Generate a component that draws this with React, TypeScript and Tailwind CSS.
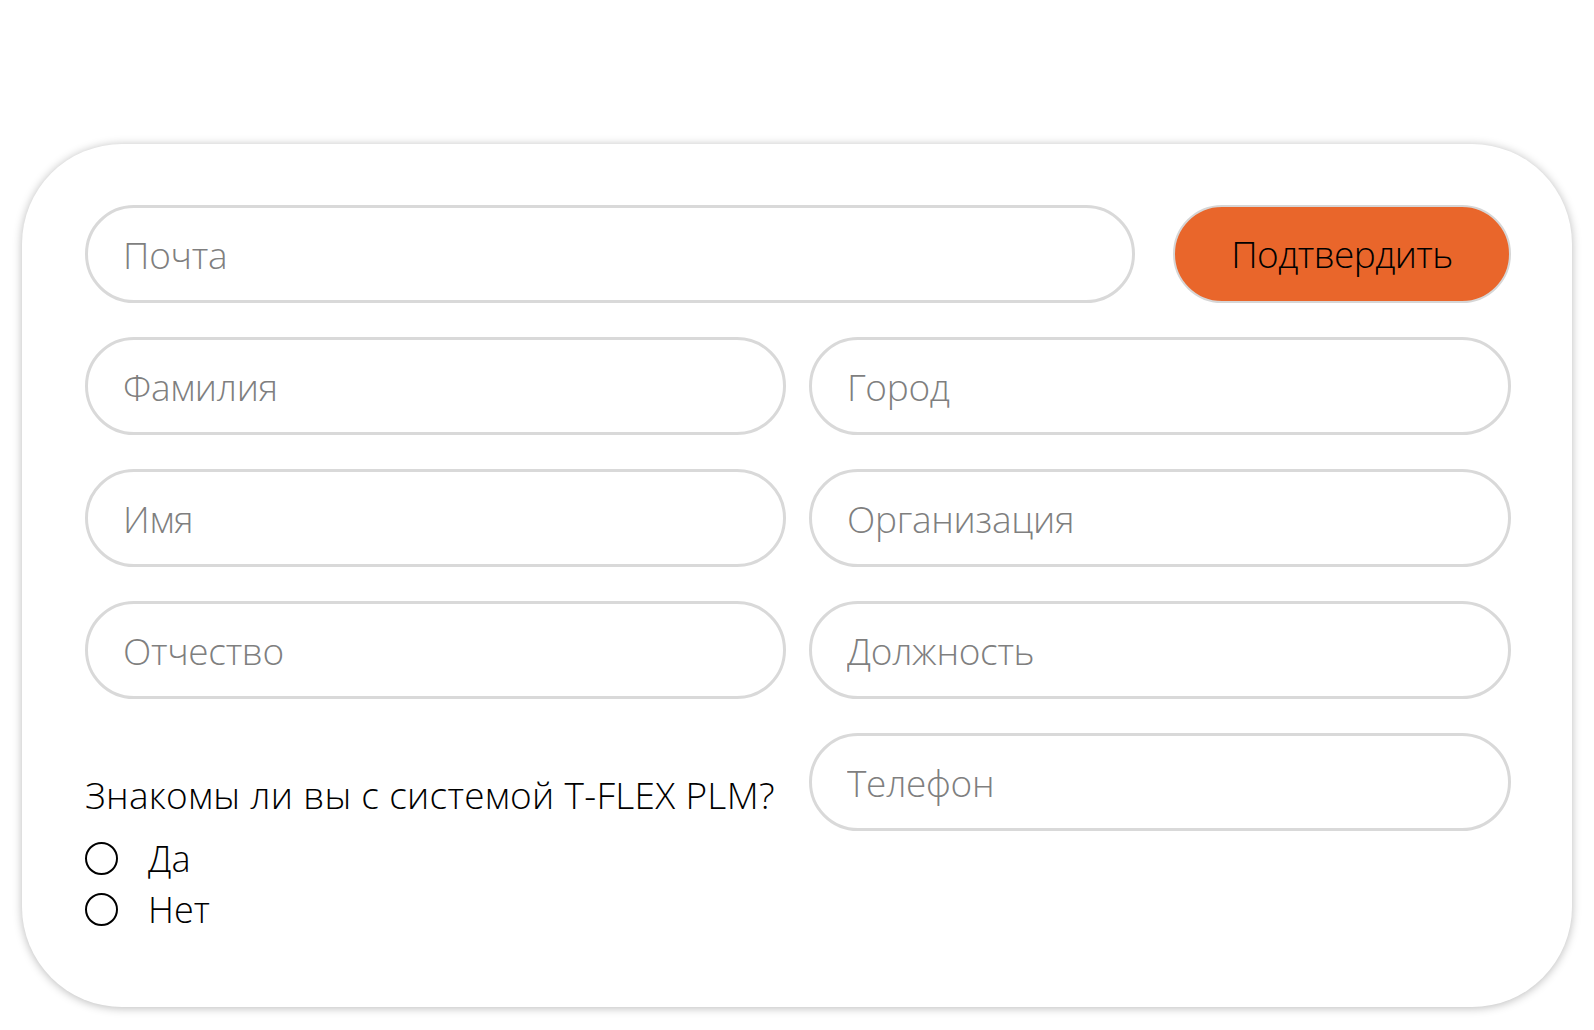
import React from "react";

const inputCls =
  "w-full h-[98px] rounded-full border-[3px] border-[#d9d9d9] bg-white pl-[35px] pr-6 text-[37px] font-light tracking-[-0.3px] text-[#7f7f7f] placeholder:text-[#7f7f7f] outline-none";

function Field({ ph }: { ph: string }) {
  return <input className={inputCls} placeholder={ph} style={{ fontFamily: '"Open Sans", sans-serif' }} />;
}

function Radio({ label }: { label: string }) {
  return (
    <label className="flex items-center h-[51px]">
      <span className="block w-[33px] h-[33px] rounded-full border-2 border-black" />
      <span className="ml-[30px] text-[36px] font-light text-black leading-none">{label}</span>
    </label>
  );
}

export default function App() {
  return (
    <div className="min-h-[1030px] bg-white pt-[144px] pl-[22px]" style={{ fontFamily: '"Open Sans", sans-serif' }}>
      <div className="w-[1550px] h-[863px] rounded-[100px] bg-white shadow-[0_1px_10px_rgba(0,0,0,0.28)] pt-[61px] pl-[63px] pr-[61px]">
        <div className="flex gap-[38px]">
          <div className="w-[1050px]">
            <Field ph="Почта" />
          </div>
          <button className="w-[338px] h-[98px] rounded-full border-2 border-[#d6d6d6] bg-[#e9662b] text-[37px] font-light tracking-[-0.6px] text-black">
            Подтвердить
          </button>
        </div>
        <div className="grid grid-cols-[701px_702px] gap-x-[23px] mt-[34px]">
          <div className="flex flex-col gap-[34px]">
            <Field ph="Фамилия" />
            <Field ph="Имя" />
            <Field ph="Отчество" />
            <div className="mt-[40px]">
              <div className="text-[37px] font-light text-black leading-[44px] tracking-[0.3px] whitespace-nowrap">
                Знакомы ли вы с системой T-FLEX PLM?
              </div>
              <div className="mt-[16px] flex flex-col">
                <Radio label="Да" />
                <Radio label="Нет" />
              </div>
            </div>
          </div>
          <div className="flex flex-col gap-[34px]">
            <Field ph="Город" />
            <Field ph="Организация" />
            <Field ph="Должность" />
            <Field ph="Телефон" />
          </div>
        </div>
      </div>
    </div>
  );
}
